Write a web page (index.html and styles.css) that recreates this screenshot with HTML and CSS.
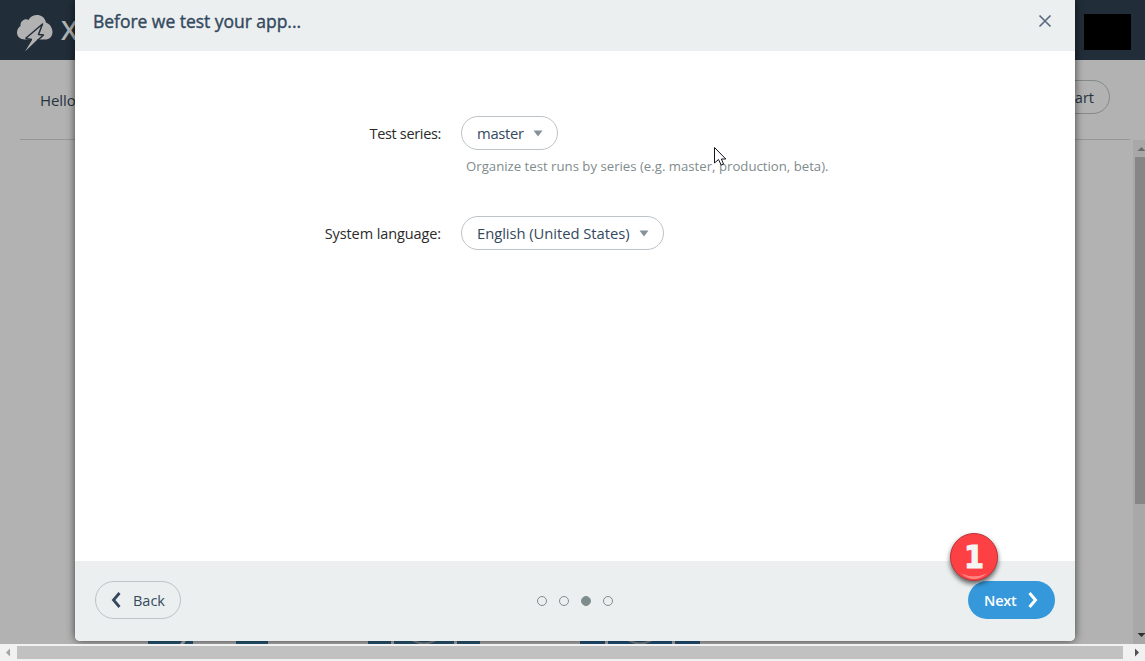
FILE: index.html
```html
<!DOCTYPE html>
<html lang="en">
<head>
<meta charset="utf-8">
<title>Before we test your app...</title>
<link rel="stylesheet" href="styles.css">
</head>
<body>
<div class="window">
  <div class="page">
    <header class="topbar">
      <svg class="logo" width="38" height="38" viewBox="0 0 38 38">
        <path fill="#b2b2b2" d="M9 25.500C4 25.500 1 22.500 1 18.500C1 15 3 13 4.500 12C4 7 9 4 12.500 6C16 -1 28 -1 30 8.500C34 10 36.500 14 36.500 18C36.500 23 33 25.500 29 25.500Z"/>
        <path fill="#b2b2b2" d="M10.500 24.500L16 26L9 37.500L21 26L21 21Z"/>
        <path fill="none" stroke="#212d38" stroke-width="1.500" stroke-linejoin="round" d="M9.500 24.500L26.500 10L22.500 20.500L27.500 21L21.500 26.500M9.500 24.500L16 25.500"/>
      </svg>
      <span class="brand">X</span>
      <span class="account"></span>
    </header>
    <div class="subbar">
      <span class="hello">Hello</span>
      <span class="start">Start</span>
    </div>
    <div class="content">
      <div class="cards">
        <svg width="120" height="3"><path fill="#265a74" d="M0 0H34L32 3H0ZM38 0H45V3H36ZM88 0H120V3H88Z"/></svg>
        <svg width="112" height="3"><path fill="#2b5876" d="M0 0H23V3H0ZM26 0H86V3H26ZM89 0H112V3H89Z"/><path stroke="#83898c" stroke-width="2" fill="none" d="M44 -1Q56 6 68 -1"/></svg>
        <svg width="120" height="3"><path fill="#24547a" d="M0 0H25V3H0ZM28 0H92V3H28ZM95 0H120V3H95Z"/><path stroke="#83898c" stroke-width="2" fill="none" d="M48 -1Q60 6 72 -1"/></svg>
      </div>
      <div class="vbar">
        <svg width="12" height="17"><path fill="#6c6c6c" d="M4.500 11L8.500 7L12.500 11Z"/></svg>
        <div class="vthumb"></div>
        <svg width="12" height="17"><path fill="#303030" d="M4.500 7L8.500 11L12.500 7Z"/></svg>
      </div>
    </div>
  </div>
  <div class="hbar">
    <svg width="17" height="17"><path fill="#a3a3a3" d="M10 4.500V12.500L6 8.500Z"/></svg>
    <div class="hthumb"></div>
    <svg width="22" height="17"><path fill="#505050" d="M12 4.500V12.500L16 8.500Z"/></svg>
  </div>

  <section class="dialog">
    <header class="dialog-head">
      <h1 class="title">Before we test your app...</h1>
      <svg class="close" width="14" height="14"><path stroke="#5b6b80" stroke-width="1.700" d="M1.500 1.500L12.500 12.500M12.500 1.500L1.500 12.500"/></svg>
    </header>
    <div class="form">
      <div class="row">
        <span class="label"><span class="label-series">Test series:</span></span>
        <div class="field">
          <span class="select select-series"><span class="value">master</span><svg width="10" height="7"><path fill="#85929a" d="M0.500 0.500H9.500L5 6.500Z"/></svg></span>
          <span class="help">Organize test runs by series (e.g. master, production, beta).</span>
        </div>
      </div>
      <div class="row">
        <span class="label"><span class="label-language">System language:</span></span>
        <div class="field">
          <span class="select select-language"><span class="value">English (United States)</span><svg width="10" height="7"><path fill="#85929a" d="M0.500 0.500H9.500L5 6.500Z"/></svg></span>
        </div>
      </div>
    </div>
    <footer class="dialog-foot">
      <span class="button back"><svg width="10" height="16"><path stroke="#34495e" stroke-width="2.800" fill="none" d="M8.500 1L2.500 8L8.500 15"/></svg><span class="caption">Back</span></span>
      <div class="dots"><i class="dot"></i><i class="dot"></i><i class="dot on"></i><i class="dot"></i></div>
      <span class="button next"><span class="caption">Next</span><svg width="10" height="16"><path stroke="#fff" stroke-width="3" fill="none" d="M1.500 1L7.500 8L1.500 15"/></svg></span>
    </footer>
  </section>

  <div class="badge">
    <span class="digit">1</span>
    <svg class="gloss" width="26" height="7"><path fill="#ff8585" d="M0 0.500Q13 6 26 0.500Q13 11.500 0 0.500Z"/></svg>
  </div>
  <svg class="cursor" width="14" height="21"><path fill="#fff" stroke="#15151f" d="M0.500 0.500V16L4.500 12.500L7.200 18L9.500 17L7.400 12H11.800Z"/></svg>
</div>
</body>
</html>
```

FILE: styles.css
```css
* { box-sizing: border-box; }
body { margin: 0; font: 15px/20px "Open Sans", "Noto Sans", sans-serif; color: #34495e; }
svg { display: block; flex: none; }
.window { position: relative; width: 1145px; height: 661px; overflow: hidden; display: flex; flex-direction: column; }
.page { flex: 1; min-height: 0; display: flex; flex-direction: column; background: #b2b2b2; }
.topbar { height: 60px; flex: none; display: flex; align-items: flex-start; background: #212d38; padding: 14px 14px 0 16px; }
.brand { font-size: 27px; line-height: 32px; font-weight: 600; color: #b2b2b2; margin-left: 7px; }
.account { width: 47px; height: 36px; background: #000; margin-left: auto; }
.subbar { height: 80px; flex: none; margin: 0 15px 0 20px; padding: 0 20px; display: flex; justify-content: space-between; align-items: center; border-bottom: 1px solid #969696; color: #25333f; }
.hello { font-size: 15px; letter-spacing: -.1px; }
.start { width: 86px; height: 34px; border: 1px solid #84898c; border-radius: 17px; line-height: 33px; font-size: 14.5px; text-align: right; padding-right: 15px; margin-top: -5px; }
.content { flex: 1; display: flex; justify-content: space-between; }
.cards { display: flex; gap: 100px; padding-left: 148px; align-items: flex-end; }
.vbar { width: 12px; background: #a8a8a8; display: flex; flex-direction: column; }
.vthumb { height: 347px; margin: 0 0 122px 2px; background: #868686; }
.hbar { height: 17px; display: flex; align-items: center; background: #f1f1f1; }
.hthumb { flex: 1; height: 13px; background: #c1c1c1; }

.dialog { position: absolute; left: 75px; top: 0; width: 1000px; height: 641px; display: flex; flex-direction: column; background: #fff; border-radius: 0 0 5px 5px; overflow: hidden; box-shadow: 0 0 9px rgba(0,0,0,.65); clip-path: inset(0 -12px -3px -12px); }
.dialog-head { height: 51px; display: flex; justify-content: space-between; background: #ebeff0; padding: 9px 23px 0 18px; }
.title { margin: 0; font-size: 17.5px; line-height: 24px; font-weight: 400; letter-spacing: -.03px; -webkit-text-stroke: .4px #34495e; white-space: nowrap; }
.close { margin-top: 5px; }
.form { flex: 1; padding-top: 65px; }
.row { height: 100px; display: flex; gap: 20px; }
.label { width: 366px; display: flex; justify-content: flex-end; line-height: 35px; font-size: 14.5px; color: #2a2a2a; white-space: nowrap; }
.label-series { letter-spacing: -.33px; }
.label-language { letter-spacing: -.1px; }
.field { display: flex; flex-direction: column; align-items: flex-start; }
.select { height: 34px; display: flex; justify-content: space-between; align-items: center; border: 1px solid #bdc3c7; border-radius: 17px; padding: 0 14px 0 15px; font-size: 14.8px; white-space: nowrap; }
.value { letter-spacing: -.06px; }
.select-series { width: 97px; }
.select-series .value { letter-spacing: -.3px; }
.select-language { width: 203px; }
.help { margin: 6px 0 0 5px; font-size: 13.2px; color: #7f8c8d; white-space: nowrap; }
.dialog-foot { height: 80px; display: flex; justify-content: space-between; align-items: center; background: #ebeff0; padding: 0 20px 2px; }
.button { height: 38px; border-radius: 19px; display: flex; align-items: center; font-size: 14.5px; }
.caption { padding-top: 1px; }
.back { width: 86px; border: 1px solid #bdc3c7; padding-left: 15px; gap: 12px; }
.next { width: 87px; background: #3498db; color: #fff; font-weight: 600; padding: 0 17px 0 16px; justify-content: space-between; letter-spacing: -.2px; }
.dots { display: flex; gap: 12px; padding-top: 2px; }
.dot { width: 10px; height: 10px; border: 1px solid #7f8c8d; border-radius: 50%; }
.on { background: #7f8c8d; }

.badge { position: absolute; left: 950px; top: 533px; width: 48px; height: 48px; border-radius: 50%; background: #fd4044; border: 1.5px solid #bd3439; box-shadow: 0 3px 5px rgba(0,0,0,.6); display: flex; flex-direction: column; align-items: center; }
.digit { font: bold 32px/47px "DejaVu Sans Condensed", "DejaVu Sans", sans-serif; font-stretch: condensed; color: #f5f5f5; -webkit-text-stroke: 1px #f5f5f5; }
.gloss { margin-top: -8px; }
.cursor { position: absolute; left: 714px; top: 147px; }
```
